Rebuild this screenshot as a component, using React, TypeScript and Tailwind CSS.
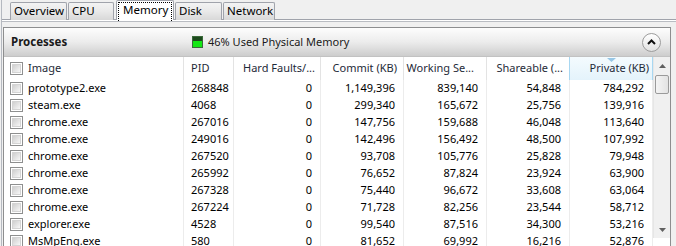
import React from "react";

const rows: string[][] = [
  ["prototype2.exe", "268848", "0", "1,149,396", "839,140", "54,848", "784,292"],
  ["steam.exe", "4068", "0", "299,340", "165,672", "25,756", "139,916"],
  ["chrome.exe", "267016", "0", "147,756", "159,688", "46,048", "113,640"],
  ["chrome.exe", "249016", "0", "142,496", "156,492", "48,500", "107,992"],
  ["chrome.exe", "267520", "0", "93,708", "105,776", "25,828", "79,948"],
  ["chrome.exe", "265992", "0", "76,652", "87,824", "23,924", "63,900"],
  ["chrome.exe", "267328", "0", "75,440", "96,672", "33,608", "63,064"],
  ["chrome.exe", "267224", "0", "71,728", "82,256", "23,544", "58,712"],
  ["explorer.exe", "4528", "0", "99,540", "87,516", "34,300", "53,216"],
  ["MsMpEng.exe", "580", "0", "81,652", "69,992", "16,216", "52,876"],
];

const grid = "grid grid-cols-[180px_50px_87px_83px_83px_83px_83px]";

function Check() {
  return (
    <div className="w-[13px] h-[13px] border border-[#8e8f8f] bg-white p-[1px] shrink-0">
      <div className="w-full h-full border border-[#d4d4d4] bg-gradient-to-br from-[#cfcfcf] to-[#f7f7f7]" />
    </div>
  );
}

function Tab({ label, w, ml }: { label: string; w: string; ml: string }) {
  return (
    <div
      className={`${w} ${ml} h-[18px] mt-[2px] border border-b-0 border-[#a0a3ab] bg-gradient-to-b from-[#f3f3f3] via-[#e9e9e9] to-[#d8d8d8] pl-[3px] leading-[16px] text-[11.5px] rounded-t-[2px] whitespace-nowrap overflow-hidden`}
    >
      {label}
    </div>
  );
}

export default function App() {
  return (
    <div className="w-[676px] h-[246px] overflow-hidden bg-[#f0f0f0] text-[11px] text-black font-['Segoe_UI','Noto_Sans',sans-serif]">
      <div className="ml-[1px] h-full border-l border-[#b5b9c0] flex flex-col">
        {/* Tabs */}
        <div className="h-[20px] shrink-0 flex items-start pl-[8px] border-b border-[#a0a3ab]">
          <Tab label="Overview" w="w-[57px]" ml="ml-0" />
          <Tab label="CPU" w="w-[46px]" ml="ml-[1px]" />
          <div className="w-[58px] ml-[2px] h-[20px] -mb-[1px] self-start border border-b-0 border-[#a0a3ab] bg-white rounded-t-[2px] p-[1px] relative z-10">
            <div className="h-[19px] border border-dotted border-black border-b-0 pl-[4px] leading-[14px] text-[11.5px]">
              Memory
            </div>
          </div>
          <Tab label="Disk" w="w-[47px]" ml="ml-[1px]" />
          <Tab label="Network" w="w-[52px]" ml="ml-[1px]" />
        </div>
        <div className="h-[1px] bg-white shrink-0" />
        <div className="flex-1 border-t border-[#b9bcc2] pt-[5px] pl-[1px]">
          {/* Panel */}
          <div className="w-[668px] border border-[#8d8e8f] bg-white flex flex-col h-[240px]">
            <div className="h-[29px] shrink-0 flex items-center bg-gradient-to-b from-[#fdfdfd] via-[#ececec] to-[#cdcdcd] border-b border-[#c2c2c2]">
              <div className="w-[181px] pl-[7px] font-bold text-[11.5px] text-[#1a1a1a]">Processes</div>
              <div className="flex items-center gap-[5px] ml-[7px]">
                <div className="w-[11px] h-[12px] border border-[#3a6a3a] flex flex-col">
                  <div className="h-[4px] bg-[#1d4a1d] bg-[radial-gradient(#5fbf5f_0.6px,transparent_0.7px)] bg-[length:2px_2px]" />
                  <div className="flex-1 bg-[#14e814]" />
                </div>
                <span className="text-[#1a1a1a] text-[11px]">46% Used Physical Memory</span>
              </div>
              <div className="ml-auto mr-[9px] w-[19px] h-[19px] rounded-full border border-[#9c9c9c] bg-gradient-to-b from-white to-[#e2e2e2] flex items-center justify-center">
                <svg width="9" height="6" viewBox="0 0 9 6">
                  <path d="M1 5 L4.5 1.5 L8 5" fill="none" stroke="#111" strokeWidth="2" />
                </svg>
              </div>
            </div>
            <div className="flex flex-1 min-h-0">
              <div className="flex-1 flex flex-col">
                {/* header */}
                <div className={`${grid} h-[23px] shrink-0 text-[#1e2a38]`}>
                  <div className="flex items-center pl-[6px] gap-[5px] border-r border-[#e3e3e3]">
                    <Check />
                    <span>Image</span>
                  </div>
                  <div className="flex items-center pl-[7px] border-r border-[#e3e3e3]">PID</div>
                  <div className="flex items-center justify-end pr-[5px] border-r border-[#e3e3e3] whitespace-nowrap">Hard Faults/...</div>
                  <div className="flex items-center justify-end pr-[6px] border-r border-[#e3e3e3] whitespace-nowrap">Commit (KB)</div>
                  <div className="flex items-center justify-end pr-[12px] border-r border-[#e3e3e3] whitespace-nowrap">Working Se...</div>
                  <div className="flex items-center justify-end pr-[6px] border-r border-[#e3e3e3] whitespace-nowrap">Shareable (...</div>
                  <div className="relative flex items-center justify-end pr-[3px] border-x border-[#a8d7f1] bg-gradient-to-b from-[#f4fbfe] to-[#e4f3fb] whitespace-nowrap -ml-[1px]">
                    <svg className="absolute top-[1px] left-[37px]" width="9" height="5" viewBox="0 0 9 5">
                      <path d="M0 0 L9 0 L4.5 4 Z" fill="#97c7e6" />
                    </svg>
                    Private (KB)
                  </div>
                </div>
                {/* body */}
                <div className="flex-1 overflow-hidden">
                  {rows.map((r, i) => (
                    <div key={i} className={`${grid} h-[17px]`}>
                      <div className="flex items-center pl-[6px] gap-[5px] border-r border-[#ececec]">
                        <Check />
                        <span>{r[0]}</span>
                      </div>
                      <div className="flex items-center pl-[7px] border-r border-[#ececec]">{r[1]}</div>
                      {r.slice(2).map((v, j) => (
                        <div key={j} className="flex items-center justify-end pr-[8px] border-r border-[#ececec]">
                          {v}
                        </div>
                      ))}
                    </div>
                  ))}
                </div>
              </div>
              {/* scrollbar */}
              <div className="w-[17px] shrink-0 bg-[#f0f0f0] border-l border-[#e6e6e6] flex flex-col h-[181px]">
                <div className="h-[17px] flex items-center justify-center">
                  <svg width="7" height="4" viewBox="0 0 7 4">
                    <path d="M0 4 L3.5 0 L7 4 Z" fill="#606060" />
                  </svg>
                </div>
                <div className="flex-1 relative">
                  <div className="mx-[1px] mt-[1px] h-[19px] border border-[#9a9a9a] rounded-[2px] bg-gradient-to-r from-[#f4f4f4] to-[#e2e2e2]" />
                </div>
                <div className="h-[17px] flex items-center justify-center">
                  <svg width="7" height="4" viewBox="0 0 7 4">
                    <path d="M0 0 L7 0 L3.5 4 Z" fill="#606060" />
                  </svg>
                </div>
              </div>
            </div>
          </div>
        </div>
      </div>
    </div>
  );
}
